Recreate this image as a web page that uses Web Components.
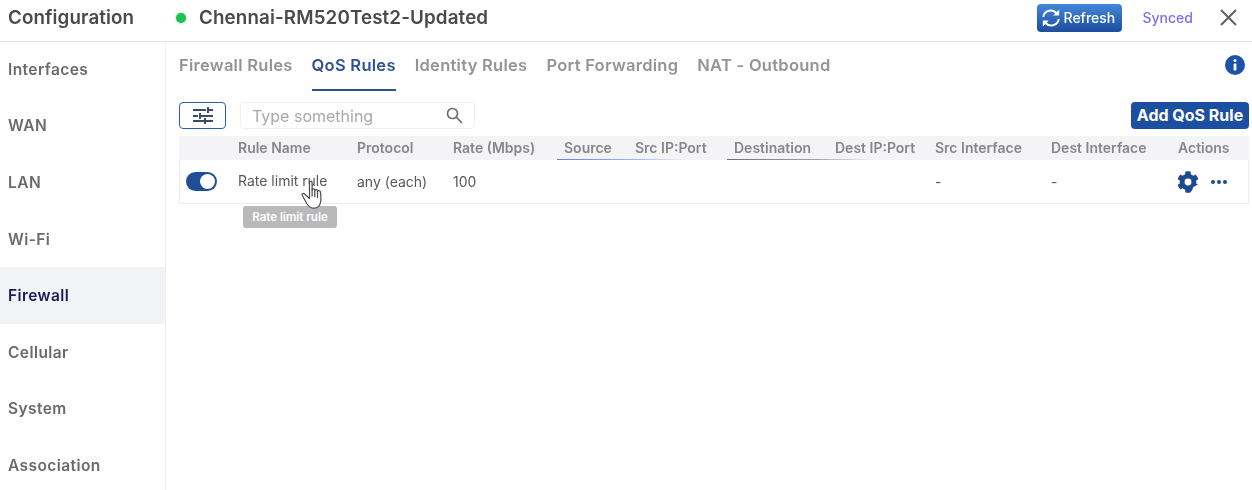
<!DOCTYPE html>
<html>
<head>
<meta charset="utf-8">
<title>Configuration</title>
<style>
    html, body { margin: 0; height: 100%; background: #fff; overflow: hidden; }
    body { font-family: Inter, "Liberation Sans", sans-serif; color: #5f5f63; }
</style>
</head>
<body>
<config-app>
    <config-header slot="header" device="Chennai-RM520Test2-Updated"></config-header>
    <side-nav slot="nav">
        <nav-item>Interfaces</nav-item>
        <nav-item>WAN</nav-item>
        <nav-item>LAN</nav-item>
        <nav-item>Wi-Fi</nav-item>
        <nav-item active>Firewall</nav-item>
        <nav-item>Cellular</nav-item>
        <nav-item>System</nav-item>
        <nav-item>Association</nav-item>
    </side-nav>
    <tab-bar>
        <tab-item>Firewall Rules</tab-item>
        <tab-item active>QoS Rules</tab-item>
        <tab-item>Identity Rules</tab-item>
        <tab-item>Port Forwarding</tab-item>
        <tab-item>NAT - Outbound</tab-item>
    </tab-bar>
    <rules-toolbar></rules-toolbar>
    <rules-table></rules-table>
</config-app>

<script>
const appTemplate = document.createElement('template');
appTemplate.innerHTML = `
    <style>
        :host{
            display: flex;
            flex-direction: column;
            height: 490px;
            /* the reference is a soft video frame */
            filter: blur(0.3px);
        }
        .body{
            display: flex;
            flex: 1;
            min-height: 0;
        }
        .main{
            flex: 1;
            min-width: 0;
            padding: 0 3px 0 13px;
        }
    </style>
    <slot name="header"></slot>
    <div class="body">
        <slot name="nav"></slot>
        <div class="main"><slot></slot></div>
    </div>
`;

class ConfigApp extends HTMLElement {
    constructor() {
        super();
        this.attachShadow({ mode: 'open' }).appendChild(appTemplate.content.cloneNode(true));
    }
}

const headerTemplate = document.createElement('template');
headerTemplate.innerHTML = `
    <style>
        :host{
            display: flex;
            align-items: center;
            height: 35px;
            padding: 0 15px 6px 8px;
            border-bottom: 1px solid #e2e2e2;
        }
        .title{
            width: 168px;
            font-size: 18.8px;
            font-weight: 600;
            letter-spacing: 0.1px;
            color: #4a4a4d;
        }
        .dot{
            width: 10px;
            height: 10px;
            border-radius: 50%;
            background: #1cc04f;
            box-shadow: 0 0 3px #7fe09c;
            margin-right: 13px;
        }
        .device{
            flex: 1;
            font-size: 18.8px;
            font-weight: 600;
            letter-spacing: 0.12px;
            color: #4a4a4d;
        }
        .refresh{
            display: flex;
            align-items: center;
            gap: 3px;
            box-sizing: border-box;
            width: 85px;
            height: 28px;
            padding-left: 4px;
            border-radius: 4px;
            background: linear-gradient(#4487da, #1c4d9f);
            color: #fff;
            font-size: 14px;
            font-weight: 500;
        }
        .synced{
            margin: 0 27px 0 21px;
            font-size: 14px;
            font-weight: 500;
            color: #7d70ee;
        }
        svg{ display: block; }
    </style>
    <div class="title">Configuration</div>
    <div class="dot"></div>
    <div class="device"></div>
    <div class="refresh">
        <svg width="20" height="18" viewBox="0 0 20 18" fill="none" stroke="#fff" stroke-width="1.9">
            <path d="M2.2 8A7.6 7.6 0 0 1 15.8 4.6"/>
            <path d="M17.8 10A7.6 7.6 0 0 1 4.2 13.4"/>
            <path d="M18.2 .6V6.600H12.200" fill="#fff" stroke="none"/>
            <path d="M1.800 17.400V11.400H7.800" fill="#fff" stroke="none"/>
        </svg>
        <span>Refresh</span>
    </div>
    <div class="synced">Synced</div>
    <svg width="17" height="17" viewBox="0 0 17 17" stroke="#626262" stroke-width="2" fill="none">
        <path d="M1 1L16 16M16 1L1 16"/>
    </svg>
`;

class ConfigHeader extends HTMLElement {
    constructor() {
        super();
        this.attachShadow({ mode: 'open' }).appendChild(headerTemplate.content.cloneNode(true));
        this.$device = this.shadowRoot.querySelector('.device');
    }

    static get observedAttributes() {
        return ['device'];
    }

    attributeChangedCallback(name, oldValue, newValue) {
        this.$device.textContent = newValue;
    }
}

const navTemplate = document.createElement('template');
navTemplate.innerHTML = `
    <style>
        :host{
            display: block;
            flex: none;
            width: 165px;
            margin-top: -1px;
            border-right: 1px solid #efefef;
        }
    </style>
    <slot></slot>
`;

class SideNav extends HTMLElement {
    constructor() {
        super();
        this.attachShadow({ mode: 'open' }).appendChild(navTemplate.content.cloneNode(true));
    }
}

const navItemTemplate = document.createElement('template');
navItemTemplate.innerHTML = `
    <style>
        :host{
            display: flex;
            align-items: center;
            height: 56.6px;
            padding-left: 8px;
            font-size: 15.5px;
            font-weight: 600;
            letter-spacing: 0.42px;
            color: #6a6a6e;
        }
        :host([active]){
            background: #f2f3f7;
            color: #1b1b5c;
        }
    </style>
    <slot></slot>
`;

class NavItem extends HTMLElement {
    constructor() {
        super();
        this.attachShadow({ mode: 'open' }).appendChild(navItemTemplate.content.cloneNode(true));
    }
}

const tabBarTemplate = document.createElement('template');
tabBarTemplate.innerHTML = `
    <style>
        :host{
            display: flex;
            align-items: flex-start;
            gap: 19px;
            height: 60px;
            position: relative;
        }
        .info{
            position: absolute;
            right: 4px;
            top: 13px;
        }
    </style>
    <slot></slot>
    <svg class="info" width="20" height="20" viewBox="0 0 20 20">
        <circle cx="10" cy="10" r="10" fill="#1c53a8"/>
        <circle cx="10" cy="5.6" r="1.5" fill="#fff"/>
        <rect x="8.6" y="8.4" width="2.8" height="7" rx=".6" fill="#fff"/>
    </svg>
`;

class TabBar extends HTMLElement {
    constructor() {
        super();
        this.attachShadow({ mode: 'open' }).appendChild(tabBarTemplate.content.cloneNode(true));
    }
}

const tabTemplate = document.createElement('template');
tabTemplate.innerHTML = `
    <style>
        :host{
            display: block;
            box-sizing: border-box;
            height: 49px;
            padding-top: 11px;
            font-size: 16.5px;
            line-height: 24px;
            font-weight: 600;
            letter-spacing: 0.27px;
            color: #949498;
        }
        :host([active]){
            color: #2f5296;
            border-bottom: 2px solid #2c4f92;
        }
    </style>
    <slot></slot>
`;

class TabItem extends HTMLElement {
    constructor() {
        super();
        this.attachShadow({ mode: 'open' }).appendChild(tabTemplate.content.cloneNode(true));
    }
}

const toolbarTemplate = document.createElement('template');
toolbarTemplate.innerHTML = `
    <style>
        :host{
            display: flex;
            align-items: center;
            height: 27px;
        }
        .filter{
            display: flex;
            align-items: center;
            justify-content: center;
            box-sizing: border-box;
            width: 47px;
            height: 27px;
            margin-right: 14px;
            border: 1px solid #2c5da8;
            border-radius: 4px;
        }
        .search{
            display: flex;
            align-items: center;
            justify-content: space-between;
            box-sizing: border-box;
            width: 235px;
            height: 27px;
            padding: 0 11px 0 11px;
            border: 1px solid #f0f0f0;
            border-radius: 4px;
            font-size: 16px;
            color: #a9a9ad;
        }
        .add{
            margin-left: auto;
            box-sizing: border-box;
            width: 118px;
            height: 27px;
            border-radius: 4px;
            background: #1c4f9f;
            color: #fff;
            font-size: 16px;
            font-weight: 700;
            line-height: 27px;
            text-align: center;
        }
        svg{ display: block; }
    </style>
    <div class="filter">
        <svg width="20" height="17" viewBox="0 0 20 17" fill="none" stroke="#3d4c66" stroke-width="2">
            <path d="M0 3H13M15 0V6M16 3H20"/>
            <path d="M0 9H5M7 6V12M8 9H20"/>
            <path d="M0 14H11M12 11V17M13 14H20"/>
        </svg>
    </div>
    <div class="search">
        <span>Type something</span>
        <svg width="17" height="17" viewBox="0 0 17 17" fill="none" stroke="#6e6e72" stroke-width="1.7">
            <circle cx="6.5" cy="6.5" r="5"/>
            <path d="M10.2 10.2L16 16"/>
        </svg>
    </div>
    <div class="add">Add QoS Rule</div>
`;

class RulesToolbar extends HTMLElement {
    constructor() {
        super();
        this.attachShadow({ mode: 'open' }).appendChild(toolbarTemplate.content.cloneNode(true));
    }
}

const tableTemplate = document.createElement('template');
tableTemplate.innerHTML = `
    <style>
        :host{
            display: block;
            position: relative;
            margin-top: 7px;
        }
        .row{
            display: grid;
            grid-template-columns: 59px 119px 96px 111px 71px 99px 101px 100px 116px 127px 71px;
            align-items: center;
        }
        .head{
            height: 24px;
            background: #f4f4f6;
            font-size: 14px;
            font-weight: 600;
            color: #87878b;
        }
        .head span{
            margin-top: -0.5px;
        }
        .data{
            height: 43px;
            border: 1px solid #ececec;
            border-width: 0 1px 1px 1px;
            font-size: 14px;
            color: #58585c;
            grid-template-columns: 58px 119px 96px 111px 71px 99px 101px 100px 116px 127px 71px;
        }
        .lined{
            position: relative;
        }
        .lined::after{
            content: '';
            position: absolute;
            left: -7px;
            bottom: -4px;
            width: 130px;
            height: 1.5px;
        }
        .src::after{
            background: linear-gradient(90deg, #5f80ea, #9db4f5 60%, transparent);
        }
        .dst::after{
            width: 145px;
            background: linear-gradient(90deg, #707074, #a0a0a3 60%, transparent);
        }
        .toggle{
            box-sizing: border-box;
            width: 31px;
            height: 19px;
            margin-left: 6px;
            padding: 2px;
            border-radius: 10px;
            background: #1f4e96;
            display: flex;
            justify-content: flex-end;
        }
        .toggle i{
            display: block;
            width: 15px;
            height: 15px;
            border-radius: 50%;
            background: #fff;
        }
        .name{
            margin-top: -3px;
        }
        .actions{
            display: flex;
            align-items: center;
            gap: 12px;
            margin-left: -1px;
        }
        .tip{
            position: absolute;
            left: 64px;
            top: 70px;
            width: 94px;
            height: 22px;
            border-radius: 3px;
            background: #b9b9ba;
            color: #fff;
            font-size: 11.5px;
            font-weight: 600;
            line-height: 22px;
            text-align: center;
        }
        .hand{
            position: absolute;
            left: 122px;
            top: 44px;
        }
        svg{ display: block; }
    </style>
    <div class="row head">
        <span></span>
        <span>Rule Name</span>
        <span>Protocol</span>
        <span>Rate (Mbps)</span>
        <span class="lined src">Source</span>
        <span>Src IP:Port</span>
        <span class="lined dst">Destination</span>
        <span>Dest IP:Port</span>
        <span>Src Interface</span>
        <span>Dest Interface</span>
        <span>Actions</span>
    </div>
    <div class="row data">
        <div class="toggle"><i></i></div>
        <span class="name">Rate limit rule</span>
        <span>any (each)</span>
        <span>100</span>
        <span></span>
        <span></span>
        <span></span>
        <span></span>
        <span>-</span>
        <span>-</span>
        <div class="actions">
            <svg width="22" height="22" viewBox="0 0 512 512" fill="#1c4a8f">
                <path d="M487 316l-42-25a192 192 0 0 0 0-70l42-25c5-3 7-9 5-14a248 248 0 0 0-55-95c-4-4-10-5-15-2l-42 25a188 188 0 0 0-61-35V26c0-6-4-11-9-12a250 250 0 0 0-109 0c-6 1-10 6-10 12v49a194 194 0 0 0-61 35L89 85c-5-3-11-2-15 2a246 246 0 0 0-55 95c-2 5 0 11 5 14l42 25a192 192 0 0 0 0 70l-42 25c-5 3-7 9-5 14a248 248 0 0 0 55 95c4 4 10 5 15 2l42-25a188 188 0 0 0 61 35v49c0 6 4 11 9 12a250 250 0 0 0 109 0c6-1 10-6 10-12v-49a194 194 0 0 0-61 35l42 25c5 3 11 2 15-2a246 246 0 0 0 55-95c2-5 0-11-5-14zM256 336a80 80 0 1 1 0-160 80 80 0 0 1 0 160z"/>
            </svg>
            <svg width="16" height="4" viewBox="0 0 16 4" fill="#1c4a8f">
                <circle cx="2" cy="2" r="2"/><circle cx="8" cy="2" r="2"/><circle cx="14" cy="2" r="2"/>
            </svg>
        </div>
    </div>
    <div class="tip">Rate limit rule</div>
    <svg class="hand" width="22" height="29" viewBox="0 0 22 29" fill="#fff" stroke="#4c4c4c" stroke-width="1.2" stroke-linejoin="round" stroke-linecap="round">
        <path d="M8.500 2.400c0-1.700 2.600-1.700 2.600 0V10c0-1.500 2.700-1.500 2.700 0v.8c0-1.500 2.700-1.500 2.700 0v.8c0-1.400 2.600-1.400 2.900.2.500 3.600.800 6.800.300 9.700-.500 3.100-2.300 6.700-6.700 6.700-3.800 0-5.500-2-7-4.200L1.200 15.300c-.7-1.200.9-2.500 2.100-1.500l5.200 4.700z"/>
        <path d="M11.100 10v6M13.800 10.800v6M16.500 11.600v6" fill="none"/>
    </svg>
`;

class RulesTable extends HTMLElement {
    constructor() {
        super();
        this.attachShadow({ mode: 'open' }).appendChild(tableTemplate.content.cloneNode(true));
    }
}

customElements.define('config-app', ConfigApp);
customElements.define('config-header', ConfigHeader);
customElements.define('side-nav', SideNav);
customElements.define('nav-item', NavItem);
customElements.define('tab-bar', TabBar);
customElements.define('tab-item', TabItem);
customElements.define('rules-toolbar', RulesToolbar);
customElements.define('rules-table', RulesTable);
</script>
</body>
</html>
